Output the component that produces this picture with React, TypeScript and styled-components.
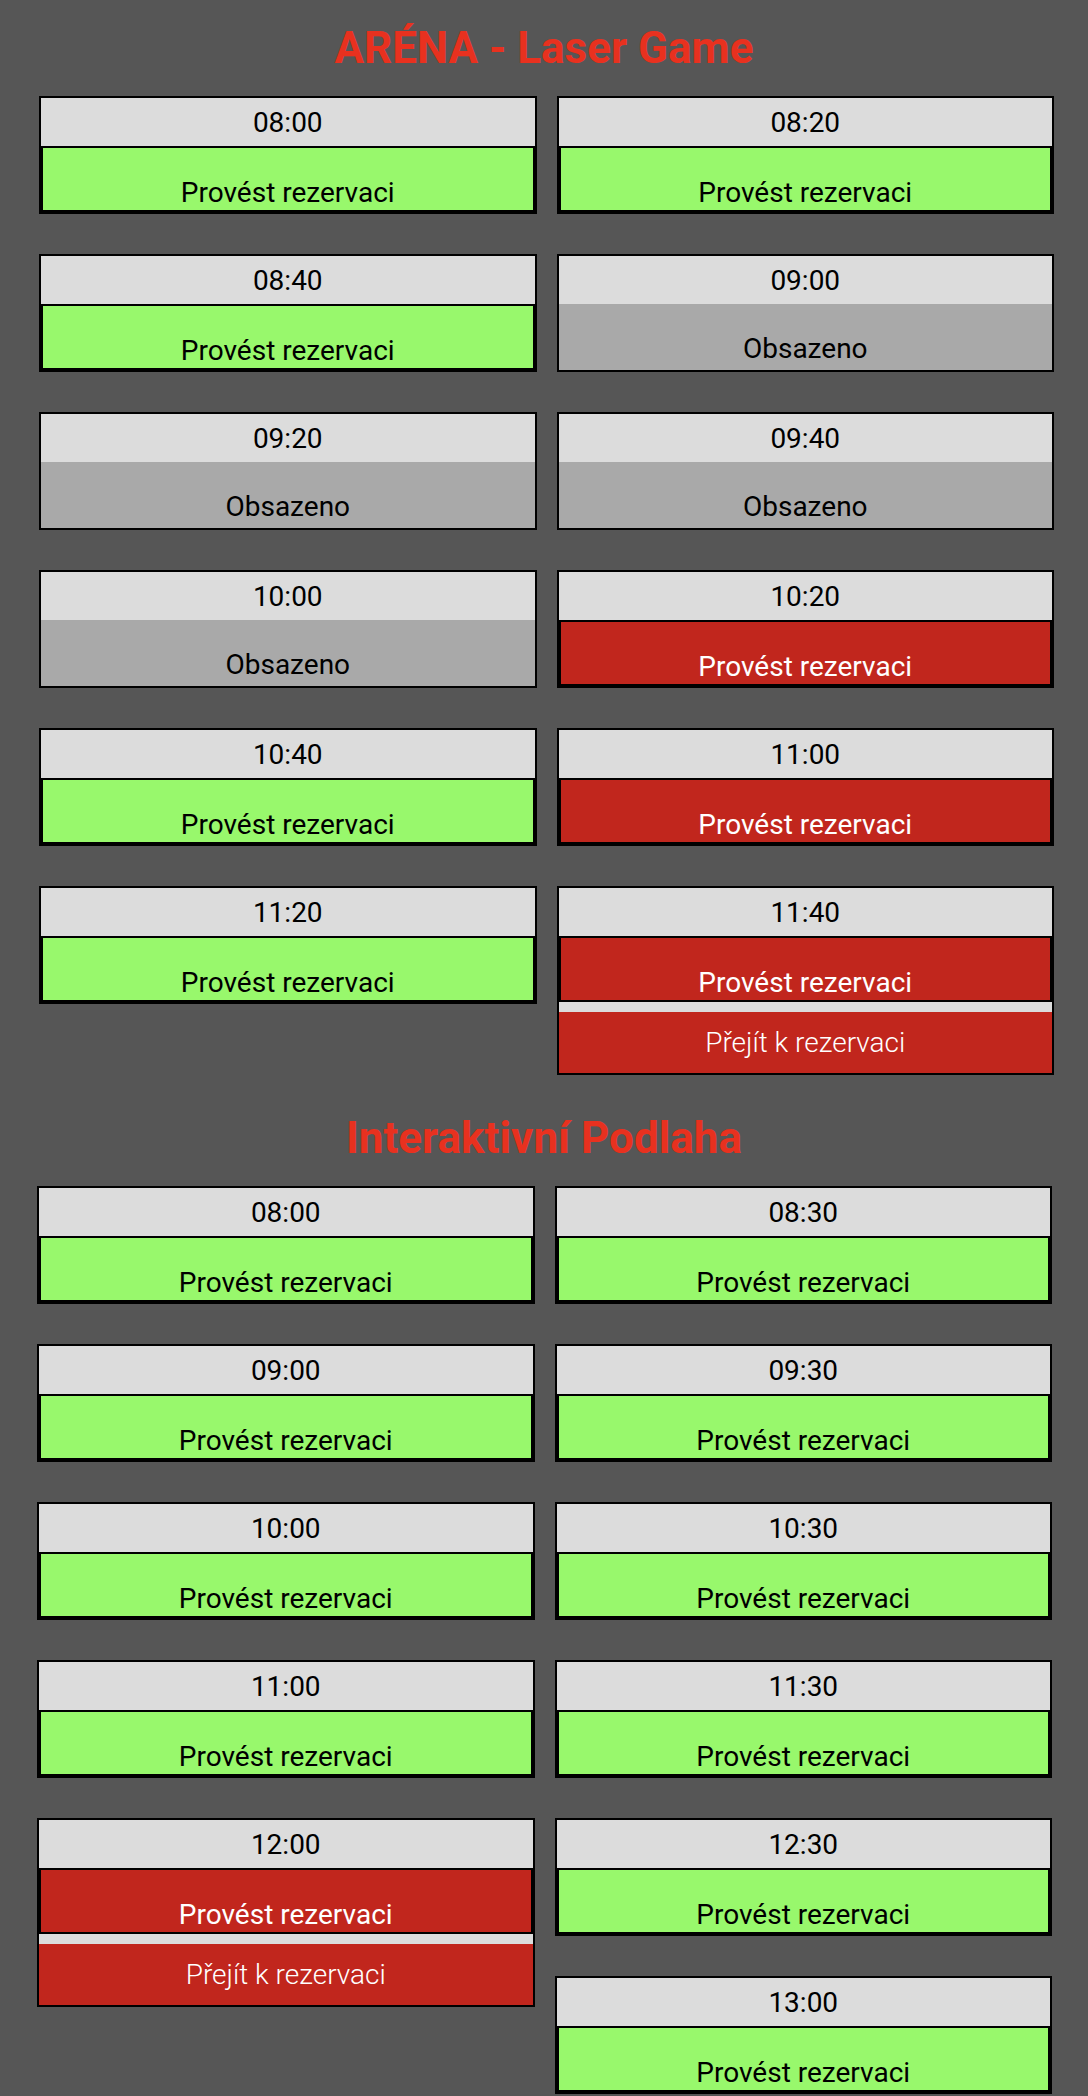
import React from "react";
import styled, { createGlobalStyle, css } from "styled-components";

const GlobalStyle = createGlobalStyle`
  html, body {
    margin: 0;
    padding: 0;
    background: #565656;
  }
  body {
    font-family: Roboto, "Liberation Sans", Arial, sans-serif;
  }
`;

type SlotState = "free" | "busy" | "picked" | "current";

interface Slot {
  time: string;
  state: SlotState;
}

interface Venue {
  name: string;
  shift: number;
  slots: Slot[];
}

const venues: Venue[] = [
  {
    name: "ARÉNA - Laser Game",
    shift: 0,
    slots: [
      { time: "08:00", state: "free" },
      { time: "08:20", state: "free" },
      { time: "08:40", state: "free" },
      { time: "09:00", state: "busy" },
      { time: "09:20", state: "busy" },
      { time: "09:40", state: "busy" },
      { time: "10:00", state: "busy" },
      { time: "10:20", state: "picked" },
      { time: "10:40", state: "free" },
      { time: "11:00", state: "picked" },
      { time: "11:20", state: "free" },
      { time: "11:40", state: "current" },
    ],
  },
  {
    name: "Interaktivní Podlaha",
    shift: 2,
    slots: [
      { time: "08:00", state: "free" },
      { time: "08:30", state: "free" },
      { time: "09:00", state: "free" },
      { time: "09:30", state: "free" },
      { time: "10:00", state: "free" },
      { time: "10:30", state: "free" },
      { time: "11:00", state: "free" },
      { time: "11:30", state: "free" },
      { time: "12:00", state: "current" },
      { time: "12:30", state: "free" },
      { time: "13:00", state: "free" },
    ],
  },
];

const CARD_H = 118;
const CURRENT_H = 189;

/* Items flow like floats: each goes into the column whose bottom is higher up, left first. */
function splitColumns(slots: Slot[]): [Slot[], Slot[]] {
  const cols: [Slot[], Slot[]] = [[], []];
  const heights = [0, 0];
  slots.forEach((s) => {
    const idx = heights[1] < heights[0] ? 1 : 0;
    cols[idx].push(s);
    heights[idx] += (s.state === "current" ? CURRENT_H : CARD_H) + 40;
  });
  return cols;
}

const Page = styled.main`
  display: flex;
  flex-direction: column;
  gap: 37px;
  padding-top: 22px;
  min-height: 100vh;
  box-sizing: border-box;
  background: #565656;
`;

const VenueSection = styled.section`
  display: flex;
  flex-direction: column;
  gap: 22px;
`;

const VenueTitle = styled.h1`
  margin: 0;
  font-family: Roboto, "Liberation Sans", Arial, sans-serif;
  font-weight: 700;
  font-size: 44px;
  line-height: normal;
  color: #e8311f;
  text-align: center;
`;

const Columns = styled.div<{ $shift: number }>`
  display: grid;
  grid-template-columns: 1fr 1fr;
  column-gap: 20px;
  align-items: start;
  width: 1015px;
  margin-left: ${(p) => 39 - p.$shift}px;
`;

const Column = styled.div`
  display: flex;
  flex-direction: column;
  gap: 40px;
`;

const Card = styled.div`
  display: flex;
  flex-direction: column;
  border: 2px solid #000;
  background: #dcdcdc;
`;

const Time = styled.div`
  height: 48px;
  display: flex;
  align-items: center;
  justify-content: center;
  font-size: 28px;
  color: #000;
`;

const ReserveButton = styled.button<{ $picked: boolean }>`
  box-sizing: border-box;
  width: 100%;
  height: 66px;
  margin: 0;
  padding: 0 0 1.4px;
  border: 2px solid #000;
  display: flex;
  align-items: flex-end;
  justify-content: center;
  font-family: Roboto, "Liberation Sans", Arial, sans-serif;
  font-size: 28px;
  line-height: 33px;
  cursor: pointer;
  ${(p) =>
    p.$picked
      ? css`
          background: #c1261d;
          color: #fff;
        `
      : css`
          background: #98f86c;
          color: #000;
        `}
`;

const Busy = styled.div`
  box-sizing: border-box;
  height: 66px;
  padding-bottom: 5.4px;
  display: flex;
  align-items: flex-end;
  justify-content: center;
  background: #a9a9a9;
  font-size: 28px;
  line-height: 33px;
  color: #000;
`;

const GoTo = styled.a`
  margin-top: 10px;
  height: 61px;
  display: flex;
  align-items: center;
  justify-content: center;
  background: #c1261d;
  color: #fff;
  font-size: 28px;
  font-weight: 300;
  text-decoration: none;
  cursor: pointer;
`;

function SlotCard({ slot }: { slot: Slot }) {
  return (
    <Card>
      <Time>{slot.time}</Time>
      {slot.state === "busy" ? (
        <Busy>Obsazeno</Busy>
      ) : (
        <ReserveButton type="button" $picked={slot.state !== "free"}>
          Provést rezervaci
        </ReserveButton>
      )}
      {slot.state === "current" && <GoTo>Přejít k rezervaci</GoTo>}
    </Card>
  );
}

function VenueBlock({ venue }: { venue: Venue }) {
  const [left, right] = splitColumns(venue.slots);
  return (
    <VenueSection>
      <VenueTitle>{venue.name}</VenueTitle>
      <Columns $shift={venue.shift}>
        <Column>
          {left.map((s) => (
            <SlotCard key={s.time} slot={s} />
          ))}
        </Column>
        <Column>
          {right.map((s) => (
            <SlotCard key={s.time} slot={s} />
          ))}
        </Column>
      </Columns>
    </VenueSection>
  );
}

export default function App() {
  return (
    <>
      <GlobalStyle />
      <Page>
        {venues.map((v) => (
          <VenueBlock key={v.name} venue={v} />
        ))}
      </Page>
    </>
  );
}
